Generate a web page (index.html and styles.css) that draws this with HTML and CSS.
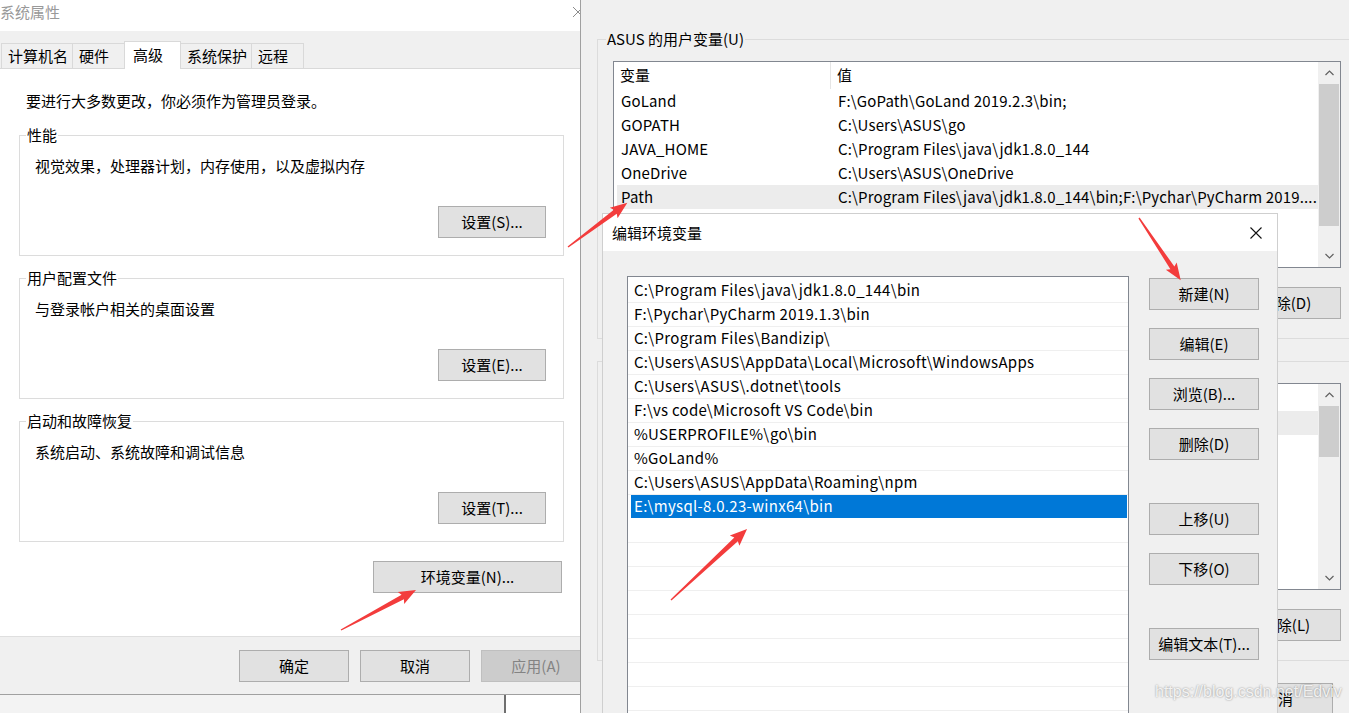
FILE: index.html
```html
<!DOCTYPE html>
<html lang="zh-CN">
<head>
    <meta charset="UTF-8">
    <title>环境变量</title>
    <link rel="stylesheet" href="styles.css">
</head>
<body>
<div class="desktop">

    <!-- 系统属性 -->
    <div class="window sys-props">
        <div class="titlebar">
            <span class="title">系统属性</span>
            <span class="close"><svg width="10" height="10" viewBox="0 0 10 10"><path d="M0 0L10 10M10 0L0 10" stroke="#8c8c8c" stroke-width="1"/></svg></span>
        </div>
        <div class="tabs">
            <div class="tab">计算机名</div>
            <div class="tab">硬件</div>
            <div class="tab active">高级</div>
            <div class="tab">系统保护</div>
            <div class="tab">远程</div>
        </div>
        <div class="page">
            <p class="note">要进行大多数更改，你必须作为管理员登录。</p>
            <fieldset class="group">
                <legend>性能</legend>
                <p class="group-desc">视觉效果，处理器计划，内存使用，以及虚拟内存</p>
                <div class="group-actions"><button class="btn btn-set">设置(S)...</button></div>
            </fieldset>
            <fieldset class="group">
                <legend>用户配置文件</legend>
                <p class="group-desc">与登录帐户相关的桌面设置</p>
                <div class="group-actions"><button class="btn btn-set">设置(E)...</button></div>
            </fieldset>
            <fieldset class="group">
                <legend>启动和故障恢复</legend>
                <p class="group-desc">系统启动、系统故障和调试信息</p>
                <div class="group-actions"><button class="btn btn-set">设置(T)...</button></div>
            </fieldset>
            <div class="env-row"><button class="btn btn-env">环境变量(N)...</button></div>
        </div>
        <div class="footer">
            <button class="btn btn-footer">确定</button>
            <button class="btn btn-footer">取消</button>
            <button class="btn btn-footer" disabled>应用(A)</button>
        </div>
    </div>
    <div class="behind"><div class="behind-pane"></div></div>

    <!-- 环境变量 -->
    <div class="window env-vars">
        <fieldset class="var-group">
            <legend>ASUS 的用户变量(U)</legend>
            <div class="var-list">
                <div class="var-table">
                    <div class="var-head"><span class="col-name">变量</span><span class="col-value">值</span></div>
                    <div class="var-row"><span class="col-name">GoLand</span><span class="col-value">F:\GoPath\GoLand 2019.2.3\bin;</span></div>
                    <div class="var-row"><span class="col-name">GOPATH</span><span class="col-value">C:\Users\ASUS\go</span></div>
                    <div class="var-row"><span class="col-name">JAVA_HOME</span><span class="col-value">C:\Program Files\java\jdk1.8.0_144</span></div>
                    <div class="var-row"><span class="col-name">OneDrive</span><span class="col-value">C:\Users\ASUS\OneDrive</span></div>
                    <div class="var-row selected"><span class="col-name">Path</span><span class="col-value">C:\Program Files\java\jdk1.8.0_144\bin;F:\Pychar\PyCharm 2019....</span></div>
                </div>
                <div class="scrollbar">
                    <span class="sb-arrow"><svg width="9" height="6" viewBox="0 0 9 6"><path d="M0.5 5L4.5 1L8.5 5" fill="none" stroke="#606060" stroke-width="1.2"/></svg></span>
                    <div class="sb-track"><div class="sb-thumb thumb-user"></div></div>
                    <span class="sb-arrow"><svg width="9" height="6" viewBox="0 0 9 6"><path d="M0.5 1L4.5 5L8.5 1" fill="none" stroke="#606060" stroke-width="1.2"/></svg></span>
                </div>
            </div>
            <div class="var-actions">
                <button class="btn btn-var">新建(N)...</button>
                <button class="btn btn-var">编辑(E)...</button>
                <button class="btn btn-var">删除(D)</button>
            </div>
        </fieldset>
        <fieldset class="var-group">
            <legend>系统变量(S)</legend>
            <div class="var-list">
                <div class="var-table">
                    <div class="var-head"><span class="col-name">变量</span><span class="col-value">值</span></div>
                    <div class="var-row selected"><span class="col-name">ComSpec</span><span class="col-value">C:\WINDOWS\system32\cmd.exe</span></div>
                    <div class="var-row"><span class="col-name">DriverData</span><span class="col-value">C:\Windows\System32\Drivers\DriverData</span></div>
                    <div class="var-row"><span class="col-name">JAVA_HOME</span><span class="col-value">C:\Program Files\java\jdk1.8.0_144</span></div>
                    <div class="var-row"><span class="col-name">NUMBER_OF_PROCESSORS</span><span class="col-value">8</span></div>
                    <div class="var-row"><span class="col-name">OS</span><span class="col-value">Windows_NT</span></div>
                    <div class="var-row"><span class="col-name">PATHEXT</span><span class="col-value">.COM;.EXE;.BAT;.CMD;.VBS;.VBE;.JS;.JSE;.WSF;.WSH;.MSC</span></div>
                    <div class="var-row"><span class="col-name">PROCESSOR_ARCHITECTURE</span><span class="col-value">AMD64</span></div>
                </div>
                <div class="scrollbar">
                    <span class="sb-arrow"><svg width="9" height="6" viewBox="0 0 9 6"><path d="M0.5 5L4.5 1L8.5 5" fill="none" stroke="#606060" stroke-width="1.2"/></svg></span>
                    <div class="sb-track"><div class="sb-thumb thumb-sys"></div></div>
                    <span class="sb-arrow"><svg width="9" height="6" viewBox="0 0 9 6"><path d="M0.5 1L4.5 5L8.5 1" fill="none" stroke="#606060" stroke-width="1.2"/></svg></span>
                </div>
            </div>
            <div class="var-actions">
                <button class="btn btn-var">新建(W)...</button>
                <button class="btn btn-var">编辑(I)...</button>
                <button class="btn btn-var">删除(L)</button>
            </div>
        </fieldset>
        <div class="dialog-actions">
            <button class="btn btn-var">确定</button>
            <button class="btn btn-var">取消</button>
        </div>
    </div>

    <!-- 编辑环境变量 -->
    <div class="window edit-env">
        <div class="edit-titlebar">
            <span>编辑环境变量</span>
            <span class="close"><svg width="12" height="12" viewBox="0 0 12 12"><path d="M0.5 0.5L11.5 11.5M11.5 0.5L0.5 11.5" stroke="#111" stroke-width="1.1"/></svg></span>
        </div>
        <div class="edit-body">
            <div class="path-list">
                <div class="path-row">C:\Program Files\java\jdk1.8.0_144\bin</div>
                <div class="path-row">F:\Pychar\PyCharm 2019.1.3\bin</div>
                <div class="path-row">C:\Program Files\Bandizip\</div>
                <div class="path-row">C:\Users\ASUS\AppData\Local\Microsoft\WindowsApps</div>
                <div class="path-row">C:\Users\ASUS\.dotnet\tools</div>
                <div class="path-row">F:\vs code\Microsoft VS Code\bin</div>
                <div class="path-row">%USERPROFILE%\go\bin</div>
                <div class="path-row">%GoLand%</div>
                <div class="path-row">C:\Users\ASUS\AppData\Roaming\npm</div>
                <div class="path-row selected">E:\mysql-8.0.23-winx64\bin</div>
                <div class="path-row"></div>
                <div class="path-row"></div>
                <div class="path-row"></div>
                <div class="path-row"></div>
                <div class="path-row"></div>
                <div class="path-row"></div>
                <div class="path-row"></div>
                <div class="path-row"></div>
                <div class="path-row"></div>
            </div>
            <div class="edit-actions">
                <button class="btn btn-side">新建(N)</button>
                <button class="btn btn-side">编辑(E)</button>
                <button class="btn btn-side">浏览(B)...</button>
                <button class="btn btn-side">删除(D)</button>
                <button class="btn btn-side spaced">上移(U)</button>
                <button class="btn btn-side">下移(O)</button>
                <button class="btn btn-side spaced">编辑文本(T)...</button>
            </div>
        </div>
    </div>

    <!-- 标注箭头 -->
    <svg class="arrows" width="1349" height="713" viewBox="0 0 1349 713">
        <g fill="#f33c3c">
            <polygon transform="translate(568,247) rotate(-36.7)" points="0,-0.7 59,-2.4 57,-6.5 74,0 57,6.5 59,2.4 0,0.7"/>
            <polygon transform="translate(1139,218) rotate(56.2)" points="0,-0.7 60,-2.4 58,-6.5 75,0 58,6.5 60,2.4 0,0.7"/>
            <polygon transform="translate(671,600) rotate(-43)" points="0,-0.7 89,-2.6 87,-7 104,0 87,7 89,2.6 0,0.7"/>
            <polygon transform="translate(341,630) rotate(-28.1)" points="0,-0.7 70,-2.5 68,-6.8 85,0 68,6.8 70,2.5 0,0.7"/>
        </g>
    </svg>

    <div class="watermark">https://blog.csdn.net/Edviv</div>
</div>
</body>
</html>
```

FILE: styles.css
```css
* {
    box-sizing: border-box;
}

body {
    margin: 0;
    font-family: "Noto Sans CJK SC", "Noto Sans", sans-serif;
    font-size: 15px;
    color: #000;
    background-color: #f0f0f0;
    overflow: hidden;
}

p {
    margin: 0;
}

.desktop {
    position: relative;
    width: 1349px;
    height: 713px;
    overflow: hidden;
}

.window {
    position: absolute;
}

.btn {
    font: inherit;
    height: 32px;
    padding: 0;
    line-height: 28px;
    color: #000;
    background-color: #e1e1e1;
    border: 1px solid #adadad;
}

.btn:disabled {
    color: #838383;
    background-color: #cccccc;
    border-color: #bfbfbf;
}

/* 系统属性 */
.sys-props {
    left: 0;
    top: 0;
    width: 600px;
    height: 695px;
    background-color: #fff;
    border-bottom: 1px solid #a0a0a0;
    display: flex;
    flex-direction: column;
}

.titlebar {
    height: 31px;
    flex: none;
    display: flex;
    justify-content: space-between;
    align-items: center;
    padding-bottom: 7px;
}

.titlebar .title {
    color: #999;
    line-height: 20px;
}

.titlebar .close {
    width: 44px;
    display: flex;
    justify-content: center;
}

.tabs {
    height: 38px;
    flex: none;
    display: flex;
    align-items: flex-end;
    padding-left: 1px;
    background-color: #f0f0f0;
    border-bottom: 1px solid #d9d9d9;
}

.tab {
    height: 25px;
    min-width: 53px;
    padding: 0 4px 0 6px;
    margin-right: -1px;
    line-height: 24px;
    border: 1px solid #d9d9d9;
    border-bottom: none;
    white-space: nowrap;
}

.tab.active {
    position: relative;
    z-index: 1;
    height: 28px;
    min-width: 57px;
    padding-left: 8px;
    margin-bottom: -1px;
    line-height: 26px;
    background-color: #fff;
}

.page {
    height: 567px;
    flex: none;
    padding: 22px 36px 0 19px;
}

.note {
    padding-left: 7px;
    line-height: 20px;
}

.group {
    margin: 12px 0 0;
    padding: 0 17px 17px 15px;
    border: 1px solid #dcdcdc;
    min-width: 0;
}

.group:first-of-type {
    margin-top: 14px;
}

.group legend {
    margin-left: -9px;
    padding: 0 1px;
    line-height: 20px;
}

.group-desc {
    margin-top: 11px;
    line-height: 20px;
}

.group-actions {
    display: flex;
    justify-content: flex-end;
    margin-top: 30px;
}

.btn-set {
    width: 108px;
}

.env-row {
    display: flex;
    justify-content: flex-end;
    margin-top: 19px;
    padding-right: 2px;
}

.btn-env {
    width: 189px;
}

.footer {
    height: 58px;
    flex: none;
    display: flex;
    justify-content: flex-end;
    align-items: flex-start;
    gap: 11px;
    padding: 13px 9px 0 0;
    background-color: #f0f0f0;
    border-top: 1px solid #dfdfdf;
}

.btn-footer {
    width: 110px;
}

.behind {
    position: absolute;
    left: 0;
    top: 695px;
    width: 580px;
    height: 18px;
    background-color: #f3f3f3;
}

.behind-pane {
    height: 100%;
    margin-left: 504px;
    background-color: #fff;
    border-left: 2px solid #6f6f6f;
}

/* 环境变量 */
.env-vars {
    left: 580px;
    top: 0;
    z-index: 2;
    width: 793px;
    height: 713px;
    padding-top: 29px;
    background-color: #f0f0f0;
    border-left: 1px solid #a0a0a0;
}

.var-group {
    margin: 0 16px;
    padding: 0 15px 19px;
    border: 1px solid #dcdcdc;
    min-width: 0;
}

.var-group + .var-group {
    margin-top: 12px;
}

.var-group legend {
    margin-left: -7px;
    padding: 0 1px;
    line-height: 20px;
}

.var-list {
    margin-top: 12px;
    height: 207px;
    display: flex;
    background-color: #fff;
    border: 1px solid #828790;
}

.var-table {
    flex: 1;
    min-width: 0;
    overflow: hidden;
}

.var-head {
    height: 27px;
    display: flex;
    line-height: 26px;
}

.var-head .col-name {
    width: 217px;
    padding-left: 6px;
    border-right: 1px solid #e5e5e5;
}

.var-head .col-value {
    padding-left: 6px;
}

.var-row {
    height: 24px;
    display: flex;
    line-height: 24px;
    margin-left: 3px;
    letter-spacing: 0.15px;
    white-space: nowrap;
}

.var-row .col-name {
    width: 214px;
    flex: none;
    padding-left: 4px;
}

.var-row .col-value {
    padding-left: 7px;
    overflow: hidden;
}

.var-row.selected {
    background-color: #ececec;
}

.scrollbar {
    width: 22px;
    flex: none;
    display: flex;
    flex-direction: column;
    background-color: #f0f0f0;
}

.sb-arrow {
    height: 22px;
    flex: none;
    display: flex;
    align-items: center;
    justify-content: center;
}

.sb-track {
    flex: 1;
    padding: 0 1px;
}

.sb-thumb {
    background-color: #cdcdcd;
}

.thumb-user {
    height: 142px;
}

.thumb-sys {
    height: 51px;
}

.var-actions {
    display: flex;
    justify-content: flex-end;
    gap: 10px;
    margin-top: 19px;
}

.btn-var {
    width: 110px;
}

.dialog-actions {
    display: flex;
    justify-content: flex-end;
    gap: 11px;
    margin-top: 22px;
    padding-right: 40px;
}

/* 编辑环境变量 */
.edit-env {
    left: 602px;
    top: 213px;
    z-index: 3;
    width: 676px;
    height: 520px;
    background-color: #f0f0f0;
    border: 1px solid #cfcfcf;
}

.edit-titlebar {
    height: 37px;
    display: flex;
    justify-content: space-between;
    align-items: center;
    padding-left: 9px;
    background-color: #fff;
}

.edit-titlebar .close {
    width: 42px;
    display: flex;
    justify-content: center;
}

.edit-body {
    display: flex;
    gap: 20px;
    padding: 25px 0 0 24px;
}

.path-list {
    width: 502px;
    height: 470px;
    padding-top: 2px;
    background-color: #fff;
    border: 1px solid #828790;
}

.path-row {
    height: 24px;
    padding-left: 6px;
    line-height: 22px;
    letter-spacing: 0.3px;
    white-space: nowrap;
    border-bottom: 1px solid #efefef;
}

.path-row.selected {
    margin: 0 1px 0 3px;
    padding-left: 3px;
    color: #fff;
    background-color: #0078d7;
    border-bottom-color: #fff;
}

.edit-actions {
    display: flex;
    flex-direction: column;
    gap: 18px;
    padding-top: 2px;
}

.btn-side {
    width: 110px;
}

.btn-side.spaced {
    margin-top: 25px;
}

/* 标注 */
.arrows {
    position: absolute;
    left: 0;
    top: 0;
    z-index: 4;
    pointer-events: none;
}

.watermark {
    position: absolute;
    left: 1155px;
    top: 682px;
    z-index: 5;
    font-family: "Liberation Sans", Arial, sans-serif;
    font-size: 16px;
    line-height: 20px;
    color: rgba(255, 255, 255, 0.85);
    text-shadow: 0 0 2px rgba(0, 0, 0, 0.45);
}
```
